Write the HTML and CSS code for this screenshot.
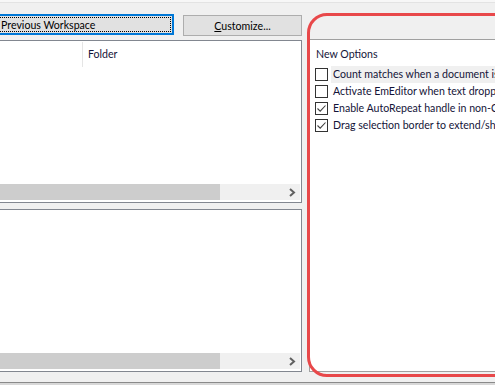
FILE: index.html
```html
<!DOCTYPE html>
<html>
<head>
<meta charset="utf-8">
<link rel="stylesheet" href="styles.css">
</head>
<body>
<div class="topline"></div>
<div class="main">
  <div class="leftcol">
    <div class="btnrow">
      <div class="btn btn-focus"><span class="focus">Previous Workspace</span></div>
      <div class="btn btn-cust"><span><u>C</u>ustomize...</span></div>
    </div>
    <div class="panel panel1">
      <div class="lhead">
        <div class="hcol1"></div>
        <div class="hcol2">Folder</div>
      </div>
      <div class="lbody"></div>
      <div class="hscroll">
        <div class="thumb"></div>
        <div class="track"></div>
        <div class="arrow"><svg width="8" height="9" viewBox="0 0 8 9"><path d="M2 1 L6 4.5 L2 8" fill="none" stroke="#606060" stroke-width="2"/></svg></div>
      </div>
    </div>
    <div class="panel panel2">
      <div class="lbody"></div>
      <div class="hscroll">
        <div class="thumb"></div>
        <div class="track"></div>
        <div class="arrow"><svg width="8" height="9" viewBox="0 0 8 9"><path d="M2 1 L6 4.5 L2 8" fill="none" stroke="#606060" stroke-width="2"/></svg></div>
      </div>
    </div>
  </div>
  <div class="rightcol">
    <div class="optbox">
      <div class="grouptitle">New Options</div>
      <div class="opt sel"><span class="cb"></span><span class="lbl">Count matches when a document is opened</span></div>
      <div class="opt"><span class="cb"></span><span class="lbl">Activate EmEditor when text dropped</span></div>
      <div class="opt"><span class="cb checked"><svg width="11" height="11" viewBox="0 0 11 11"><path d="M1.5 5.5 L4.2 8.2 L9.5 2.5" fill="none" stroke="#404040" stroke-width="1.1"/></svg></span><span class="lbl">Enable AutoRepeat handle in non-CSV mode</span></div>
      <div class="opt"><span class="cb checked"><svg width="11" height="11" viewBox="0 0 11 11"><path d="M1.5 5.5 L4.2 8.2 L9.5 2.5" fill="none" stroke="#404040" stroke-width="1.1"/></svg></span><span class="lbl">Drag selection border to extend/shrink</span></div>
    </div>
  </div>
</div>
<div class="bottomline"></div>
<div class="highlight"></div>
</body>
</html>
```
FILE: styles.css
```css
* { box-sizing: border-box; }
html, body { margin: 0; padding: 0; }
body {
  width: 495px;
  height: 385px;
  overflow: hidden;
  background: #f0f0f0;
  font-family: "Lato", "Liberation Sans", sans-serif;
  font-size: 10.6px;
  color: #141438;
  position: relative;
}
.topline {
  height: 3px;
  border-bottom: 1px solid #e3e3e3;
  background: #f7f7f7;
}
.main {
  display: flex;
  height: 379px;
}
.leftcol {
  flex: none;
  display: flex;
  flex-direction: column;
  margin-left: -10px;
  width: 312px;
}
.btnrow {
  display: flex;
  margin-top: 11px;
  height: 22px;
}
.btn {
  height: 21px;
  background: #e1e1e1;
  display: flex;
  align-items: center;
  justify-content: center;
  white-space: nowrap;
  color: #000;
}
.btn-focus {
  width: 184px;
  border: 2px solid #0078d7;
  padding: 1px;
  justify-content: flex-start;
}
.focus {
  display: flex;
  align-items: center;
  height: 100%;
  width: 100%;
  outline: 1px dotted #000;
  outline-offset: -1px;
  padding-left: 8px;
}
.btn-cust {
  margin-left: 9px;
  margin-top: 1px;
  width: 119px;
  border: 1px solid #adadad;
}
.panel {
  background: #fff;
  border: 1px solid #828790;
  display: flex;
  flex-direction: column;
  padding: 1px;
}
.panel1 {
  margin-top: 4px;
  height: 163px;
}
.panel2 {
  margin-top: 6px;
  height: 163px;
}
.lhead {
  display: flex;
  height: 25px;
  flex: none;
}
.hcol1 {
  width: 91px;
  border-right: 1px solid #e5e5e5;
}
.hcol2 {
  padding-left: 5px;
  padding-top: 6px;
}
.lbody { flex: 1; }
.hscroll {
  height: 16px;
  display: flex;
  background: #f0f0f0;
  flex: none;
  margin-bottom: 1px;
}
.thumb {
  width: 228px;
  background: #cdcdcd;
}
.track { flex: 1; }
.arrow {
  width: 17px;
  display: flex;
  align-items: center;
  justify-content: center;
}
.rightcol {
  flex: 1;
  min-width: 0;
  padding-left: 7px;
  padding-top: 36px;
  overflow: hidden;
}
.optbox {
  height: 333px;
  background: #fff;
  border: 1px solid #a0a0a0;
  border-right: none;
  padding: 5px 0 0 5px;
  overflow: hidden;
}
.grouptitle {
  height: 21px;
  line-height: 18px;
  padding-left: 1px;
}
.opt {
  display: flex;
  align-items: center;
  height: 17px;
  white-space: nowrap;
}
.cb {
  width: 13px;
  height: 13px;
  border: 1px solid #333;
  background: #fff;
  flex: none;
  display: flex;
  align-items: center;
  justify-content: center;
}
.lbl {
  margin-left: 3px;
  padding-left: 2px;
  line-height: 17px;
  flex: 1;
  overflow: hidden;
}
.opt.sel .lbl { background: #f0f0f0; }
.bottomline {
  position: absolute;
  left: 0;
  right: 0;
  bottom: 0;
  height: 3px;
  border-top: 1px solid #8a8a8a;
  background: #d8d8d8;
}
.highlight {
  position: absolute;
  left: 307px;
  top: 13px;
  width: 240px;
  height: 364px;
  border: 3px solid #e8484a;
  border-radius: 20px;
}
```
